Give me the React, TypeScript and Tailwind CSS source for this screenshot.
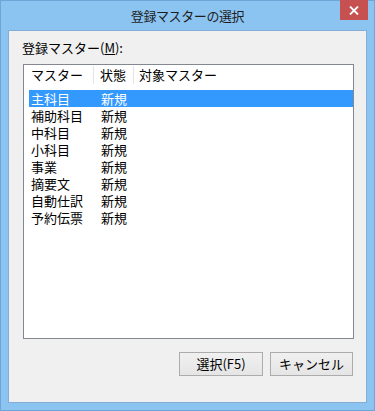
const font = { fontFamily: '"Noto Sans CJK JP", "Noto Sans", sans-serif' };

const rows = [
  { name: '主科目', state: '新規' },
  { name: '補助科目', state: '新規' },
  { name: '中科目', state: '新規' },
  { name: '小科目', state: '新規' },
  { name: '事業', state: '新規' },
  { name: '摘要文', state: '新規' },
  { name: '自動仕訳', state: '新規' },
  { name: '予約伝票', state: '新規' },
];

export default function App() {
  return (
    <div
      className="flex h-[411px] w-[375px] flex-col border border-[#6fa6da] bg-[#8cc4f1] text-[13px] text-black"
      style={font}
    >
      {/* title bar */}
      <div className="relative flex h-[29px] shrink-0 items-center justify-center">
        <span className="text-[13px] leading-[18px] tracking-[-0.4px] text-[#1e1e1e]">登録マスターの選択</span>
        <div className="absolute right-[6px] top-[-1px] flex h-[20px] w-[28px] items-center justify-center bg-[#c75050]">
          <svg width="10" height="9" viewBox="0 0 10 9">
            <path d="M1 0.5 L9 8.5 M9 0.5 L1 8.5" stroke="white" strokeWidth="1.8" />
          </svg>
        </div>
      </div>

      {/* client area */}
      <div className="mx-[7px] mb-[7px] flex flex-1 flex-col border border-[#85aed6] bg-[#f0f0f0] px-[13px]">
        <div className="mt-[9px] leading-[16px]">
          登録マスター(<span className="underline">M</span>):
        </div>

        <div className="ml-[1px] mr-[-1px] mt-[8px] h-[275px] border border-[#828790] bg-white">
          <div className="flex h-[20px] items-center leading-[18px]">
            <div className="w-[70px] border-r border-[#e5e5e5] pl-[7px]">マスター</div>
            <div className="w-[40px] border-r border-[#e5e5e5] pl-[6px]">状態</div>
            <div className="pl-[5px]">対象マスター</div>
          </div>
          <div className="mt-[5px] flex flex-col">
            {rows.map((r, i) => (
              <div
                key={r.name}
                className={
                  'ml-[5px] flex h-[17px] items-center leading-[17px] ' +
                  (i === 0 ? 'bg-[#3399ff] text-white' : '')
                }
              >
                <div className="w-[70px] pl-[2px]">{r.name}</div>
                <div className="pl-[2px]">{r.state}</div>
              </div>
            ))}
          </div>
        </div>

        <div className="mt-[13px] flex justify-end gap-[7px] pr-0">
          <button className="h-[24px] w-[84px] border border-[#acacac] bg-gradient-to-b from-[#f0f0f0] to-[#e5e5e5] leading-[18px]">
            選択(F5)
          </button>
          <button className="h-[24px] w-[83px] border border-[#acacac] bg-gradient-to-b from-[#f0f0f0] to-[#e5e5e5] leading-[18px]">
            キャンセル
          </button>
        </div>
      </div>
    </div>
  );
}
